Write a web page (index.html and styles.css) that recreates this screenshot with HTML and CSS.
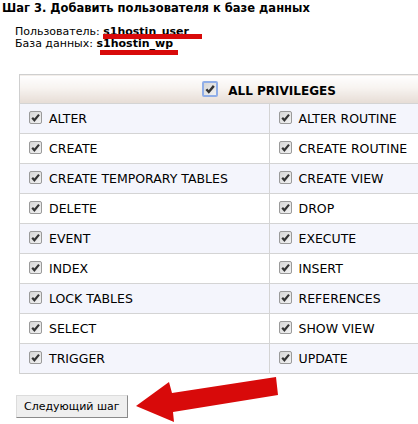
FILE: index.html
```html
<!DOCTYPE html>
<html lang="ru">
<head>
    <meta charset="UTF-8">
    <title>Добавить пользователя к базе данных</title>
    <link rel="stylesheet" href="styles.css">
</head>
<body>
    <h1 class="step-title">Шаг 3. Добавить пользователя к базе данных</h1>

    <div class="summary">
        <div>Пользователь: <b>s1hostin_user</b></div>
        <div>База данных: <b>s1hostin_wp</b></div>
    </div>

    <table class="privs">
        <thead>
            <tr>
                <th colspan="2">
                    <span class="cb cb-focus"><svg viewBox="0 0 10 10"><path d="M2 5.2 L4 7.5 L8.2 2.4"/></svg></span>
                    ALL PRIVILEGES
                </th>
            </tr>
        </thead>
        <tbody>
            <tr>
                <td><span class="cb"><svg viewBox="0 0 10 10"><path d="M2 5.2 L4 7.5 L8.2 2.4"/></svg></span>ALTER</td>
                <td><span class="cb"><svg viewBox="0 0 10 10"><path d="M2 5.2 L4 7.5 L8.2 2.4"/></svg></span>ALTER ROUTINE</td>
            </tr>
            <tr>
                <td><span class="cb"><svg viewBox="0 0 10 10"><path d="M2 5.2 L4 7.5 L8.2 2.4"/></svg></span>CREATE</td>
                <td><span class="cb"><svg viewBox="0 0 10 10"><path d="M2 5.2 L4 7.5 L8.2 2.4"/></svg></span>CREATE ROUTINE</td>
            </tr>
            <tr>
                <td><span class="cb"><svg viewBox="0 0 10 10"><path d="M2 5.2 L4 7.5 L8.2 2.4"/></svg></span>CREATE TEMPORARY TABLES</td>
                <td><span class="cb"><svg viewBox="0 0 10 10"><path d="M2 5.2 L4 7.5 L8.2 2.4"/></svg></span>CREATE VIEW</td>
            </tr>
            <tr>
                <td><span class="cb"><svg viewBox="0 0 10 10"><path d="M2 5.2 L4 7.5 L8.2 2.4"/></svg></span>DELETE</td>
                <td><span class="cb"><svg viewBox="0 0 10 10"><path d="M2 5.2 L4 7.5 L8.2 2.4"/></svg></span>DROP</td>
            </tr>
            <tr>
                <td><span class="cb"><svg viewBox="0 0 10 10"><path d="M2 5.2 L4 7.5 L8.2 2.4"/></svg></span>EVENT</td>
                <td><span class="cb"><svg viewBox="0 0 10 10"><path d="M2 5.2 L4 7.5 L8.2 2.4"/></svg></span>EXECUTE</td>
            </tr>
            <tr>
                <td><span class="cb"><svg viewBox="0 0 10 10"><path d="M2 5.2 L4 7.5 L8.2 2.4"/></svg></span>INDEX</td>
                <td><span class="cb"><svg viewBox="0 0 10 10"><path d="M2 5.2 L4 7.5 L8.2 2.4"/></svg></span>INSERT</td>
            </tr>
            <tr>
                <td><span class="cb"><svg viewBox="0 0 10 10"><path d="M2 5.2 L4 7.5 L8.2 2.4"/></svg></span>LOCK TABLES</td>
                <td><span class="cb"><svg viewBox="0 0 10 10"><path d="M2 5.2 L4 7.5 L8.2 2.4"/></svg></span>REFERENCES</td>
            </tr>
            <tr>
                <td><span class="cb"><svg viewBox="0 0 10 10"><path d="M2 5.2 L4 7.5 L8.2 2.4"/></svg></span>SELECT</td>
                <td><span class="cb"><svg viewBox="0 0 10 10"><path d="M2 5.2 L4 7.5 L8.2 2.4"/></svg></span>SHOW VIEW</td>
            </tr>
            <tr>
                <td><span class="cb"><svg viewBox="0 0 10 10"><path d="M2 5.2 L4 7.5 L8.2 2.4"/></svg></span>TRIGGER</td>
                <td><span class="cb"><svg viewBox="0 0 10 10"><path d="M2 5.2 L4 7.5 L8.2 2.4"/></svg></span>UPDATE</td>
            </tr>
        </tbody>
    </table>

    <button class="next">Следующий шаг</button>

    <!-- red marker annotations drawn over the form -->
    <svg class="marks" width="418" height="424" viewBox="0 0 418 424">
        <rect x="103" y="34" width="99" height="5" fill="#d80a0a"/>
        <rect x="100" y="50" width="78" height="5" fill="#d80a0a"/>
        <polygon fill="#d80a0a" points="136,406 169,382 172,393 276,377 278,395 173,412 174,422"/>
    </svg>
</body>
</html>
```

FILE: styles.css
```css
html, body {
    margin: 0;
    padding: 0;
}

body {
    font-family: "DejaVu Sans", Verdana, sans-serif;
    font-size: 11px;
    color: #000;
    background: #fff;
    width: 418px;
    height: 424px;
    overflow: hidden;
    position: relative;
    padding: 0 0 0 2px;
    box-sizing: border-box;
}

.step-title {
    font-size: 11.5px;
    font-weight: bold;
    margin: 0;
    padding-top: 1px;
    line-height: 14px;
}

.summary {
    margin: 11px 0 0 13px;
    line-height: 12px;
}

.summary b {
    font-weight: bold;
}

.privs {
    margin: 24px 0 0 17px;
    width: 500px;
    border-collapse: collapse;
    border: 1px solid #cfcfcf;
    table-layout: fixed;
}

.privs th {
    height: 28px;
    padding: 0;
    font-size: 12px;
    font-weight: bold;
    text-align: center;
    background: linear-gradient(#ffffff 0%, #f7f3f0 45%, #e6dcd5 100%);
    border-bottom: 1px solid #d4d4d4;
}

.privs th .cb {
    margin-right: 6px;
    vertical-align: -2px;
}

.privs td {
    height: 29px;
    padding: 0 0 0 9px;
    font-size: 12.5px;
    border-top: 1px solid #d4d4d4;
    border-left: 1px solid #d4d4d4;
    white-space: nowrap;
}

.privs tbody tr:nth-child(odd) td {
    background: #f4f5fc;
}

.cb {
    display: inline-block;
    width: 11px;
    height: 11px;
    border: 1px solid #9a9a9a;
    border-radius: 2px;
    background: linear-gradient(135deg, #d6d6d6 0%, #f2f2f2 100%);
    margin-right: 7px;
    vertical-align: -1px;
    position: relative;
}

.cb svg {
    position: absolute;
    left: 0;
    top: 0;
    width: 11px;
    height: 11px;
}

.cb path {
    fill: none;
    stroke: #333;
    stroke-width: 2;
}

.cb-focus {
    width: 12px;
    height: 12px;
    border: 2px solid #90aee8;
}

.cb-focus svg {
    width: 12px;
    height: 12px;
}

.next {
    margin: 21px 0 0 14px;
    height: 23px;
    padding: 0 7px;
    font-family: "DejaVu Sans", Verdana, sans-serif;
    font-size: 11px;
    color: #000;
    background: #efefef;
    border: 1px solid;
    border-color: #dcdcdc #8a8a8a #8a8a8a #dcdcdc;
    border-radius: 0;
}

.marks {
    position: absolute;
    left: 0;
    top: 0;
}
```
